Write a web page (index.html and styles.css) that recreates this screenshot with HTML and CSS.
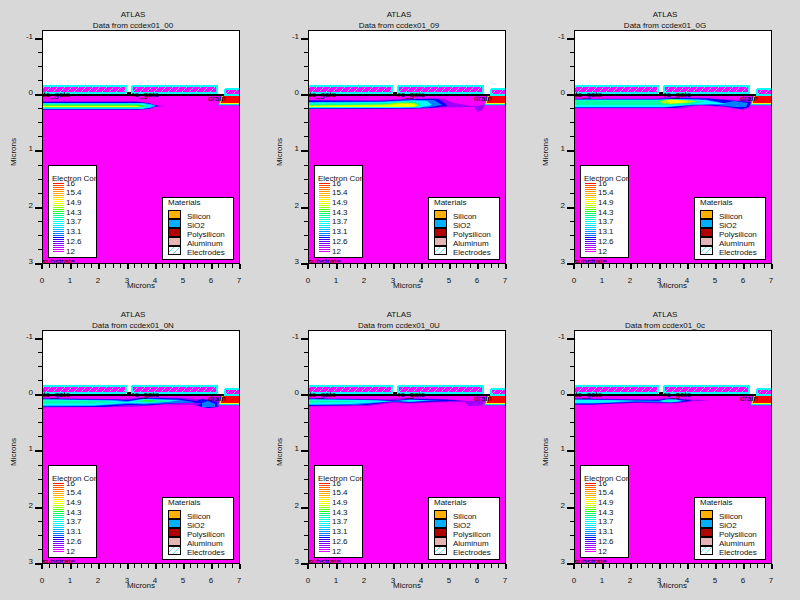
FILE: index.html
```html
<!DOCTYPE html>
<html lang="en">
<head>
<meta charset="utf-8">
<title>ATLAS electron concentration</title>
<link rel="stylesheet" href="styles.css">
</head>
<body>
<main class="plots" id="plots"></main>
<script src="plots.js"></script>
</body>
</html>
```
FILE: styles.css
```css
body {
  margin: 0;
  padding-right: 2px;
  background: #d8d8d8;
  color: #000;
  font-family: "Liberation Sans", Arial, sans-serif;
}

.plots {
  display: grid;
  grid-template-columns: repeat(3, 1fr);
}

.plot {
  display: block;
  width: 100%;
  height: auto;
  shape-rendering: crispEdges;
}

.plot text {
  font-size: 8px;
  fill: #111;
}

.middle {
  text-anchor: middle;
}

.end {
  text-anchor: end;
}

.air,
.legend-box {
  fill: #fff;
}

.legend-box,
.swatch,
.frame {
  stroke: #000;
  stroke-width: 1;
}

.frame {
  fill: none;
}

.bulk {
  fill: #f0f;
}

.plot .region {
  fill: #000;
}

.gate {
  fill: #f0f;
  stroke: #00ffff;
  stroke-width: 2;
}

.hatch {
  fill: none;
  stroke: #60e8ff;
  stroke-width: 1;
}

.smooth {
  shape-rendering: auto;
}
```
FILE: plots.js
```js
const COLORS = {
  purple: '#a000ff', violet: '#5000ff', blue: '#0000ff', azure: '#0080ff',
  sky: '#00c0ff', cyan: '#00ffff', mint: '#00ffa0', green: '#20ff20',
  lime: '#b0ff00', yellow: '#ffff00'
};

// Contour layers of each plot, outermost first.
const plots = [
  { name: 'ccdex01_00', layers: [
    ['purple', '42,101 136,101 147,103 155,105 166,106 155,107 147,109 138,110 42,110'],
    ['blue', '42,102 138,102 149,103 154,105 159,106 154,107 149,109 138,109.6 42,109.6'],
    ['sky', '42,103 142,103 151,104 156,106 150,108 142,109 42,109'],
    ['cyan', '42,103.6 143,103.6 152,106 143,108.4 42,108.4'],
    ['green', '42,104.6 138,104.6 148,106.2 138,107.6 42,107.6'],
    ['yellow', '42,105.7 136,105.7 142,106.2 136,107 42,107']
  ] },
  { name: 'ccdex01_09', layers: [
    ['purple', '42,100 110,100 150,98.6 168,98 178,99 188,103 206,106 219,105 216,110 212,112 208,107 180,107.6 150,109 42,109'],
    ['blue', '42,100.6 114,101 150,99 172,99 180,104 181,106 166,107.8 145,108.6 42,109'],
    ['azure', '42,102 112,101.6 144,100 168,100 176,105 162,107.6 42,108.4'],
    ['cyan', '42,102.6 118,102 146,100.6 161,101 166,105 154,107.4 130,108 42,108'],
    ['mint', '42,103.8 120,103 146,101.6 156,104 150,107 42,107.4'],
    ['lime', '42,105.6 118,104.6 132,102.8 148,103 153,105.6 148,107 42,107'],
    ['yellow', '42,106 124,105.6 136,103.8 148,104.4 150,106 142,106.8 42,106.8']
  ] },
  { name: 'ccdex01_0G', layers: [
    ['purple', '42,98.6 120,98.6 140,97 178,98 204,100 219,98 218,107 212,110 190,107 166,105.6 150,108.4 42,108.4'],
    ['blue', '42,99 124,99 144,98 176,98.4 204,101 219,102 217,107 209,109 194,106.6 170,105 154,106 142,108 42,108'],
    ['azure', '42,99.4 130,99.4 144,98.8 174,99.4 192,103 202,101 216,103 214,107 202,107 180,104.4 150,106 132,107.6 42,107.6'],
    ['cyan', '42,99.8 126,99.8 140,99 172,100 194,104 160,104.6 134,107 42,107'],
    ['mint', '42,100.4 124,100.4 138,99.2 174,101.4 156,104.4 132,105 42,105'],
    ['lime', '128,101 138,99.6 158,100.6 165,101.4 154,103 138,104 130,103'],
    ['yellow', '134,101 140,100 156,101 148,102.8 138,103']
  ] },
  { name: 'ccdex01_0N', layers: [
    ['purple', '42,98 122,99 142,97.4 180,97.4 200,99 219,98 219,107 204,108 194,105 166,104.6 130,107 42,107.4'],
    ['blue', '42,98.6 116,99.4 128,100 144,97.8 178,98.4 196,101 202,99 217,102 217,107 208,108 196,105.6 202,103 190,102.6 164,104 146,105.6 128,105 104,107 42,107'],
    ['azure', '42,99 116,100 128,101 144,98.6 178,99.4 196,102.6 164,103.4 144,104.4 127,104 96,106 42,106.4'],
    ['azure', '202,103 208,101 215,104 215,107 202,107'],
    ['cyan', '42,99.6 112,100.6 126,102 144,99 180,100.6 160,102.6 144,103.6 128,103 92,105.6 42,105.6'],
    ['mint', '42,100.6 100,101 120,102.4 90,103.4 42,103.6'],
    ['mint', '132,101.4 146,99.6 174,101 150,102.8'],
    ['green', '144,100.2 154,100.2 154,101.4 144,101.4']
  ] },
  { name: 'ccdex01_0U', layers: [
    ['purple', '42,98 118,99 144,98 180,99 202,101 219,101 216,105.6 202,106 199,102 166,102.6 144,103.6 126,103 102,106 42,106.4'],
    ['blue', '42,98.6 114,99.8 128,100.6 144,98.8 176,99.4 196,100.8 166,101.8 144,102.8 126,101.8 100,105 42,106'],
    ['azure', '42,99 110,100 126,101 142,99.6 174,100.4 144,101.8 126,101.4 92,104.8 42,105'],
    ['cyan', '42,99.6 98,100 126,101.2 84,104 42,104.4'],
    ['cyan', '134,101 144,99.8 164,100.6 144,101.8'],
    ['mint', '42,100.6 74,101 98,101.8 42,102.8']
  ] },
  { name: 'ccdex01_0c', layers: [
    ['purple', '42,98 118,99.4 134,98 148,98.4 162,99.6 178,100.6 160,101.6 144,103.6 126,103.4 104,103 60,105 42,105'],
    ['blue', '42,98.8 104,99.8 126,100 138,98.6 152,99.6 160,100.6 150,102 138,103 126,102.4 102,102.4 60,104.4 42,104.4'],
    ['azure', '42,99.2 104,100.2 126,100.8 138,99.2 154,100.8 138,102.6 104,101.8 60,103.8 42,103.8'],
    ['cyan', '42,99.8 84,100.2 102,101 70,102.8 42,103'],
    ['cyan', '128,101 134,99.4 144,99.6 150,101 140,102.2 131,102'],
    ['mint', '132,100.4 142,100.4 142,101.4 132,101.4']
  ] }
];

const text = (x, y, s, cls = '') => `<text x="${x}" y="${y}" class="${cls}">${s}</text>`;
const rect = (x, y, w, h, fill = '#000') => `<rect x="${x}" y="${y}" width="${w}" height="${h}" fill="${fill}"/>`;

function axes() {
  let out = '';
  for (let i = 0; i <= 28; i++) {
    const x = Math.round(42 + i * 7.05);
    out += i % 4 ? rect(x, 264, 1, 4) : rect(i ? x : x - 1, 264, 2, 5) + text(x, 283, i / 4, 'middle');
  }
  for (let i = -4; i <= 12; i++) {
    const y = Math.round(94 + i * 14.1);
    out += i % 4 ? rect(38, y, 4, 1) : rect(35, y, 7, 2) + text(33, y + 1, i / 4, 'end');
  }
  return out + text(141, 288, 'Microns', 'middle')
    + '<text class="middle" transform="translate(16 152) rotate(-90)">Microns</text>';
}

// Stroked electrode with diagonal hatching kept inside the outline.
function gate(x, y, w, h) {
  const rise = h - 2;
  let lines = '';
  for (let p = x + 1; p < x + w - 1; p += 7) {
    const run = Math.min(rise, x + w - 1 - p);
    lines += `M${p} ${y + h - 1}l${run} ${-run}`;
  }
  return `<rect class="gate" x="${x}" y="${y}" width="${w}" height="${h}" rx="1"/><path class="hatch smooth" d="${lines}"/>`;
}

function gates() {
  return '<svg width="239" height="300"><svg x="42" width="197" height="300" viewBox="42 0 197 300">'
    + gate(38, 86, 88, 7) + gate(132, 86, 85, 7) + gate(225, 89, 20, 6) + '</svg></svg>'
    + rect(35, 94, 189, 2) + rect(127, 92, 4, 2);
}

function drain() {
  return '<g class="smooth">'
    + '<polygon fill="#2080ff" points="221,96 239,96 239,105.4 218,105.4"/>'
    + '<polygon fill="#00ffd0" points="222,96 239,96 239,104.8 219,104.8"/>'
    + '<polygon fill="#ffff00" points="222,96 239,96 239,104 219.6,104"/>'
    + '<polygon fill="#ff0000" points="223,96 239,96 239,103 220.6,103"/></g>';
}

function levels() {
  const stops = ['#ff1800', '#ff4800', '#ff6800', '#ff7800', '#ff9800', '#ffb000', '#ffb000', '#ffd000',
    '#fff000', '#ffff00', '#e8ff00', '#c8ff00', '#90ff00', '#50ff00', '#20ff20', '#00ff60', '#00ff90',
    '#00ffb0', '#00ffd0', '#00ffe8', '#00ffff', '#00e8ff', '#00d0ff', '#00b8ff', '#0098ff', '#0080ff',
    '#0060ff', '#0000ff', '#3800e0', '#5800ff', '#8000ff', '#9800ff', '#b000ff', '#d000ff', '#f000ff'];
  const names = [['16', 186], ['15.4', 195], ['14.9', 205], ['14.3', 215], ['13.7', 224], ['13.1', 234], ['12.6', 244], ['12', 254]];
  return '<rect class="legend-box" x="48.5" y="165.5" width="48" height="92"/>'
    + '<svg x="49" y="166" width="48" height="20">' + text(3, 15, 'Electron Con') + '</svg>'
    + stops.map((c, i) => rect(53, 183 + i * 2, 11, 1, c)).join('')
    + names.map(([s, y]) => text(66, y, s)).join('');
}

function materials() {
  const rows = [['Silicon', '#ffb000'], ['SiO2', '#00b0ff'], ['Polysilicon', '#b00000'], ['Aluminum', '#e6b4b4'], ['Electrodes', '#ffffff']];
  return '<rect class="legend-box" x="162.5" y="197.5" width="71" height="62"/>' + text(168, 205, 'Materials')
    + rows.map(([s, c], i) => `<rect class="swatch" x="168.5" y="${210.5 + i * 9}" width="12" height="8" fill="${c}"/>`
      + text(187, 219 + i * 9, s)).join('')
    + '<path class="hatch smooth" d="M169 252l5-5M173 254l7-7"/>';
}

document.getElementById('plots').innerHTML = plots.map(p => `
<svg class="plot" viewBox="0 0 266 300" role="img" aria-label="ATLAS, data from ${p.name}">
  ${text(133, 17, 'ATLAS', 'middle')}${text(133, 28, 'Data from ' + p.name, 'middle')}
  <rect class="air" x="42" y="30" width="198" height="64"/>
  <rect class="bulk" x="42" y="95" width="198" height="169"/>
  <g class="smooth">${p.layers.map(([c, pts]) => `<polygon fill="${COLORS[c]}" points="${pts}"/>`).join('')}</g>
  ${drain()}${gates()}
  <svg x="42" y="90" width="197" height="174">
    ${text(-3, 7, 'ate_gate', 'region')}${text(90, 7, 're_gate', 'region')}
    ${text(166, 11, 'drain', 'region')}${text(0, 174, 'substrate', 'region')}
  </svg>
  <rect class="frame" x="42.5" y="30.5" width="197" height="233"/>
  ${axes()}${levels()}${materials()}
</svg>`).join('');
```
